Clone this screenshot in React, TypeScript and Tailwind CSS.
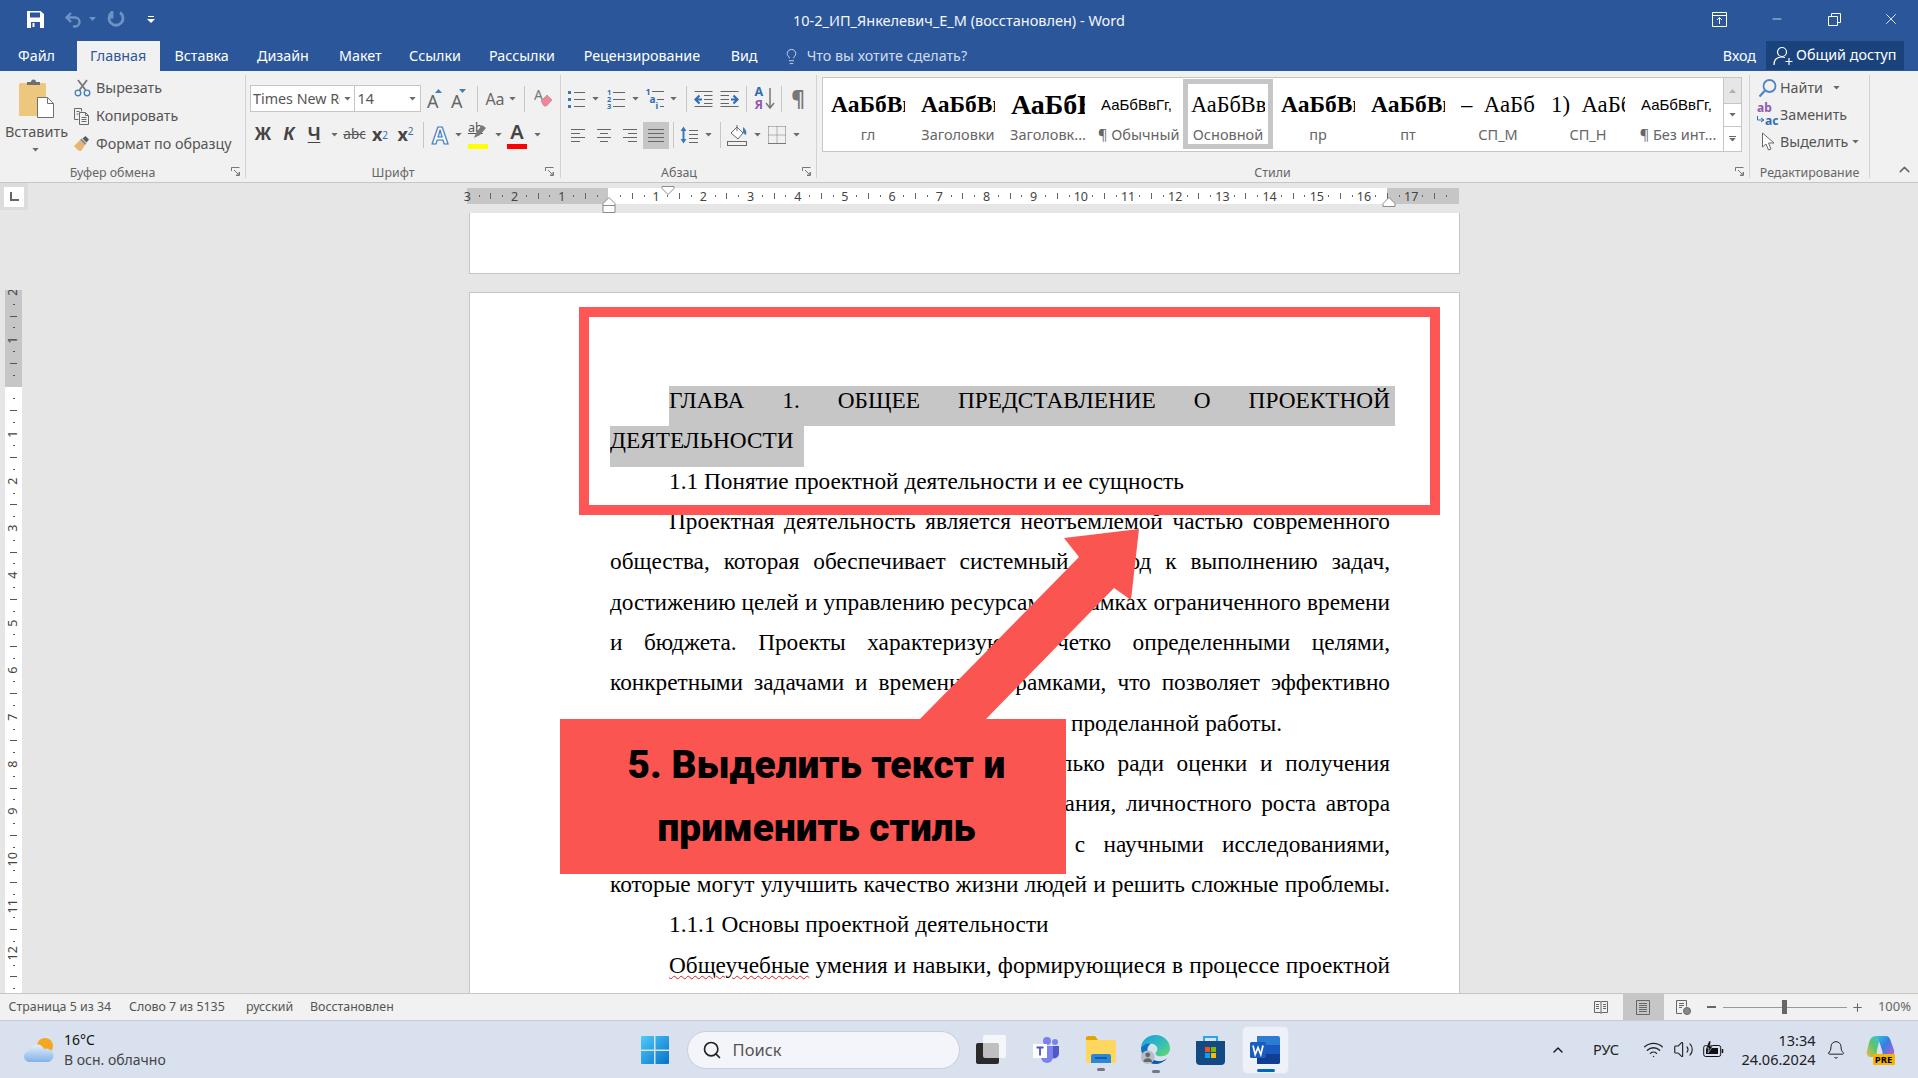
import React from "react";
import { Wifi, Volume2, ChevronUp, Bell, Search, Lightbulb, Minus, X, Plus } from "lucide-react";

const G = "#666666";
const B = "#3f7cc0";

const Caret = ({ className = "" }: { className?: string }) => (
  <svg width="7" height="4" viewBox="0 0 8 5" className={className}><path d="M0 0h8L4 4.500z" fill="#6a6a6a" /></svg>
);
const S = ({ className = "", children }: { className?: string; children?: React.ReactNode }) => (
  <div className={`flex-none h-full flex items-center justify-center ${className}`}>{children}</div>
);
const VSep = () => <div className="w-px h-[26px] bg-[#c6c6c6]" />;

const Lines = ({ rows, x1 = 2, x2 = 16, color = G }: { rows: number[]; x1?: number; x2?: number; color?: string }) => (
  <svg width="18" height="18" viewBox="0 0 18 18" fill="none" stroke={color} strokeWidth="1">
    {rows.map((y) => <path key={y} d={`M${x1} ${y}.5H${x2}`} />)}
  </svg>
);
const AlignIcon = ({ kind }: { kind: "l" | "c" | "r" }) => {
  const d = kind === "l"
    ? "M2 3.500h14M2 7.500h9M2 11.500h14M2 15.500h9"
    : kind === "c"
    ? "M2 3.500h14M5 7.500h8M2 11.500h14M5 15.500h8"
    : "M2 3.500h14M7 7.500h9M2 11.500h14M7 15.500h9";
  return <svg width="18" height="18" viewBox="0 0 18 18" fill="none" stroke={G}><path d={d} /></svg>;
};

const Launcher = ({ className = "" }: { className?: string }) => (
  <svg width="9" height="9" viewBox="0 0 9 9" fill="none" stroke="#777" className={`absolute bottom-[6px] ${className}`}>
    <path d="M.5 4V.5H8.500M.5.5H4M8.500 8.500V5M8.500 8.500H5M3 3l4.500 4.500M8 5v3H5" />
  </svg>
);

const Group = ({ label, className = "", labelClass = "", children, launcher }: { label: string; className?: string; labelClass?: string; children: React.ReactNode; launcher?: string }) => (
  <div className={`relative flex-none flex flex-col h-full ${className}`}>
    <div className="flex-1 min-h-0">{children}</div>
    <div className={`h-[19px] text-center text-[12.400px] leading-[19px] text-[#666] ${labelClass}`}>{label}</div>
    {launcher && <Launcher className={launcher} />}
  </div>
);
const GSep = () => <div className="flex-none w-px h-[103px] mt-[4px] bg-[#d2d2d2]" />;

const Scissors = () => (
  <svg width="17" height="18" viewBox="0 0 17 18" fill="none">
    <path d="M4 1l7.500 10M13 1L5.500 11" stroke="#777" strokeWidth="1.800" />
    <circle cx="4" cy="14" r="2.800" stroke={B} strokeWidth="1.300" />
    <circle cx="13" cy="14" r="2.800" stroke={B} strokeWidth="1.300" />
  </svg>
);
const CopyI = () => (
  <svg width="18" height="18" viewBox="0 0 18 18" fill="none" stroke="#6a6a6a">
    <path d="M1.500 1.500h7v3M1.500 1.500v11h4M3.500 4.500h3M3.500 7h2" />
    <path d="M6.500 5.500h6l3 3v9h-9zM12.500 5.500v3h3M8.500 10.500h5M8.500 12.500h5M8.500 14.500h5" />
  </svg>
);
const Painter = () => (
  <svg width="18" height="18" viewBox="0 0 18 18">
    <path d="M1 11l6-6 5 5-4 6c-3 0-4-2-7-5z" fill="#e6b66c" />
    <path d="M7 5l5 5 1.500-1.500-5-5z" fill="#8a8a8a" />
    <path d="M9.500 3.500l3-2.500 3.500 3.500-2.500 3z" fill="#5a5a5a" />
  </svg>
);
const PasteI = () => (
  <svg width="36" height="39" viewBox="0 0 36 39">
    <rect x="0" y="4" width="27" height="33" rx="1.500" fill="#eec77f" />
    <path d="M8 6V3h4a2.500 2.500 0 0 1 5 0h4v3z" fill="#6f6f6f" />
    <path d="M18.500 18.500h10l6 6v14h-16z" fill="#fff" stroke="#6f6f6f" />
    <path d="M28.500 18.500v6h6" fill="none" stroke="#6f6f6f" />
  </svg>
);
const Grow = ({ down }: { down?: boolean }) => (
  <div className="relative w-[18px] h-[22px]">
    <span className="absolute left-[1px] bottom-[-1px] text-[18px] leading-[20px] text-[#666]">A</span>
    <svg width="7" height="4" viewBox="0 0 7 4" className="absolute right-[2px] top-[1px]">
      {down ? <path d="M0 0h7L3.500 4z" fill={B} /> : <path d="M0 4h7L3.500 0z" fill={B} />}
    </svg>
  </div>
);
const Eraser = () => (
  <svg width="20" height="22" viewBox="0 0 20 22" fill="none">
    <text x="0" y="12" fontSize="14" fill="#777" fontFamily="Noto Sans">A</text>
    <path d="M7 13l6-6 5 5-5.500 6H10z" fill="#ea8a98" stroke="#d76a7c" strokeWidth=".6" />
  </svg>
);
const TextEffect = () => (
  <div className="text-[23px] leading-[24px] font-bold text-white [-webkit-text-stroke:1.200px_#3f7cc0]">A</div>
);
const Highlight = () => (
  <div className="relative w-[20px] h-[22px]">
    <span className="absolute left-0 top-[-3px] text-[12.500px] leading-[13px] text-[#555] underline">ab</span>
    <svg width="14" height="14" viewBox="0 0 14 14" className="absolute left-[6px] top-[0px]">
      <path d="M0 14l2-5 6-8 4 3-6 7z" fill="#7a7a7a" />
    </svg>
    <div className="absolute left-0 bottom-[-3px] w-[20px] h-[5px] bg-[#ffff00]" />
  </div>
);
const FontColor = () => (
  <div className="relative w-[20px] h-[22px]">
    <span className="absolute inset-x-0 top-[-5px] text-center text-[20px] leading-[26px] font-semibold text-[#444]">A</span>
    <div className="absolute left-0 bottom-[-3px] w-[20px] h-[5px] bg-[#ff0000]" />
  </div>
);
const Bullets = () => (
  <svg width="20" height="18" viewBox="0 0 20 18" fill="none">
    <rect x="1" y="1" width="3" height="3" fill="#3a78bd" /><rect x="1" y="8" width="3" height="3" fill="#3a78bd" /><rect x="1" y="15" width="3" height="3" fill="#3a78bd" />
    <path d="M7 2.500h11M7 9.500h11M7 16.500h11" stroke={G} />
  </svg>
);
const Numbering = () => (
  <div className="relative w-[20px] h-[22px]">
    <div className="absolute left-[1px] top-[1px] w-[6px] text-[7.500px] leading-[7.300px] font-bold text-[#2f6db5]">1<br />2<br />3</div>
    <svg width="20" height="22" viewBox="0 0 20 22" fill="none"><path d="M7 4.500h12M7 11.500h12M7 18.500h12" stroke={G} /></svg>
  </div>
);
const Multi = () => (
  <div className="relative w-[20px] h-[22px]">
    <span className="absolute left-0 top-[-1px] text-[9px] leading-[10px] font-bold text-[#2f6db5]">1</span>
    <span className="absolute left-[4px] top-[6px] text-[10px] leading-[10px] font-bold text-[#2f6db5]">a</span>
    <span className="absolute left-[10px] top-[13px] text-[9px] leading-[10px] font-bold text-[#2f6db5]">i</span>
    <svg width="20" height="22" viewBox="0 0 20 22" fill="none"><path d="M6 3.500h12M11 11.500h7M14 18.500h4" stroke={G} /></svg>
  </div>
);
const Outdent = ({ flip }: { flip?: boolean }) => (
  <svg width="19" height="18" viewBox="0 0 19 18" fill="none" stroke={G} className={flip ? "-scale-x-100" : ""}>
    <path d="M.5 1.500h18M10 5.500h8.500M10 9.500h8.500M10 13.500h8.500M.5 16.500h18" />
    <path d="M8 9.500H2M5.500 5.500L1.500 9.500l4 4" stroke="#2f6db5" strokeWidth="2.200" />
  </svg>
);
const Sort = () => (
  <div className="relative w-[20px] h-[26px]">
    <span className="absolute left-0 top-[0px] text-[12.500px] leading-[12px] font-bold text-[#2f6db5]">А</span>
    <span className="absolute left-0 top-[13px] text-[12.500px] leading-[12px] font-bold text-[#8f5ab0]">Я</span>
    <svg width="10" height="22" viewBox="0 0 10 22" fill="none" stroke="#777" strokeWidth="1.500" className="absolute right-0 top-[2px]"><path d="M5 0v20M1 15l4 5 4-5" /></svg>
  </div>
);
const LineSp = () => (
  <svg width="20" height="20" viewBox="0 0 20 20" fill="none">
    <path d="M9 5.500h9M9 9.500h9M9 13.500h9M9 17.500h9" stroke={G} />
    <path d="M3.500 4v12" stroke="#3a78bd" strokeWidth="2" />
    <path d="M.5 6l3-4.500 3 4.500zM.5 14l3 4.500 3-4.500z" fill="#3a78bd" />
  </svg>
);
const Bucket = () => (
  <svg width="22" height="22" viewBox="0 0 22 22" fill="none" stroke="#6a6a6a">
    <path d="M4 9l6-6 6 6-5 6z" fill="#fff" />
    <path d="M10 1v6" />
    <path d="M16 3c3 2 4 5 3 8-2-1-3-2-3-3z" fill="#3f7cc0" stroke="none" />
    <rect x=".5" y="17.500" width="19" height="4" fill="#f1f1f1" />
  </svg>
);
const Borders = () => (
  <svg width="18" height="18" viewBox="0 0 18 18" fill="none" stroke="#777">
    <path d="M.5.500V17.500M17.500.5V17.500M9 .5v17M.5 9h17" strokeDasharray="1 1" />
    <path d="M.5.500h17" strokeDasharray="1 1" />
    <path d="M0 17.500h18" />
  </svg>
);
const Magnifier = () => (
  <svg width="20" height="20" viewBox="0 0 20 20" fill="none">
    <circle cx="11.500" cy="8" r="6" stroke="#4d86c6" strokeWidth="1.800" />
    <path d="M7 12.500L1.500 18.500" stroke="#4d86c6" strokeWidth="2.200" />
  </svg>
);
const Replace = () => (
  <div className="relative w-[22px] h-[22px] leading-none font-bold">
    <span className="absolute left-0 top-[-3px] text-[12px] leading-[14px] text-[#8f5ab0]">ab</span>
    <span className="absolute left-[8px] top-[10px] text-[12px] leading-[14px] text-[#2f6db5]">ac</span>
    <svg width="8" height="8" viewBox="0 0 8 8" fill="none" stroke="#2f6db5" className="absolute left-0 top-[12px]"><path d="M.5 0v4h6M4 2l3 2-3 2" /></svg>
  </div>
);
const Cursor = () => (
  <svg width="14" height="20" viewBox="0 0 14 20" fill="#fff" stroke="#6a6a6a"><path d="M1.500 1v14l3.500-3 2.500 6 2.500-1-2.500-6H13z" /></svg>
);

const SERIF = "font-['Liberation_Serif',serif]";
const styles: { t: string; l: string; c: string; active?: boolean }[] = [
  { t: "АаБбВвГг", l: "гл", c: `font-bold text-[23.500px] ${SERIF}` },
  { t: "АаБбВвГг", l: "Заголовки", c: `font-bold text-[23.500px] ${SERIF}` },
  { t: "АаБбВв", l: "Заголовк...", c: `font-bold text-[28px] ${SERIF}` },
  { t: "АаБбВвГг,", l: "¶ Обычный", c: "text-[15px] font-['Liberation_Sans',sans-serif]" },
  { t: "АаБбВв", l: "Основной", c: `text-[22.300px] ${SERIF}`, active: true },
  { t: "АаБбВвГг", l: "пр", c: `font-bold text-[23.500px] ${SERIF}` },
  { t: "АаБбВвГг", l: "пт", c: `font-bold text-[23.500px] ${SERIF}` },
  { t: "–  АаБб", l: "СП_М", c: `text-[22.800px] whitespace-pre ${SERIF}` },
  { t: "1)  АаБбВв", l: "СП_Н", c: `text-[22.800px] whitespace-pre ${SERIF}` },
  { t: "АаБбВвГг,", l: "¶ Без инт...", c: "text-[15px] font-['Liberation_Sans',sans-serif]" },
];

const Ruler = () => {
  const cells = [];
  for (let i = -12; i <= 71; i++) {
    const isNum = i % 4 === 0;
    const isDash = !isNum && i % 2 === 0;
    cells.push(
      <div key={i} className="flex-none w-[11.800px] h-full flex items-center justify-center">
        {isNum ? (i !== 0 && <span className="text-[12.500px] leading-none text-[#444] pt-[2px]">{Math.abs(i / 4)}</span>) : isDash ? <div className="w-px h-[6px] bg-[#666]" /> : <div className="w-px h-[2px] bg-[#666]" />}
      </div>
    );
  }
  return (
    <div className="relative ml-[438.500px] w-[992.500px] h-[16px] flex">
      <div className="w-[141.500px] bg-[#c6c6c6]" />
      <div className="w-[779px] bg-white" />
      <div className="flex-1 bg-[#c6c6c6]" />
      <div className="absolute left-[-5px] top-0 h-full flex">{cells}</div>
      <svg width="14" height="9" viewBox="0 0 14 9" className="absolute left-[194px] top-[-2px]"><path d="M1 .5h12v2L7 8.500 1 2.500z" fill="#fff" stroke="#8a8a8a" /></svg>
      <svg width="14" height="16" viewBox="0 0 14 16" className="absolute left-[135px] top-[9px]"><path d="M7 .5l6 6v9H1v-9zM1 8.500h12" fill="#fff" stroke="#8a8a8a" /></svg>
      <svg width="14" height="10" viewBox="0 0 14 10" className="absolute left-[915px] top-[9px]"><path d="M7 .5l6 6v3H1v-3z" fill="#fff" stroke="#8a8a8a" /></svg>
    </div>
  );
};

const VRuler = () => {
  const cells = [];
  for (let i = -8; i <= 52; i++) {
    const isNum = i % 4 === 0;
    const isDash = !isNum && i % 2 === 0;
    cells.push(
      <div key={i} className="flex-none h-[11.800px] w-full flex items-center justify-center">
        {isNum ? (i !== 0 && <span className="-rotate-90 text-[12.500px] leading-none text-[#444]">{Math.abs(i / 4)}</span>) : isDash ? <div className="h-px w-[7px] bg-[#555]" /> : <div className="h-px w-[2px] bg-[#555]" />}
      </div>
    );
  }
  return (
    <div className="relative ml-[5px] mt-[80px] w-[17px] flex-1 overflow-hidden flex flex-col">
      <div className="h-[97px] bg-[#c6c6c6]" />
      <div className="flex-1 bg-white" />
      <div className="absolute left-0 top-[-3.300px] w-full flex flex-col">{cells}</div>
    </div>
  );
};

const J = "text-justify [text-align-last:justify] [word-spacing:-2px]";
const TL = ({ className = "", children }: { className?: string; children: React.ReactNode }) => (
  <div className={`h-[40.350px] leading-[28px] ${className}`}>{children}</div>
);

const Edge = () => (
  <svg width="31" height="31" viewBox="0 0 32 32">
    <defs>
      <linearGradient id="e1" x1="0" y1="0" x2="1" y2="1"><stop offset="0" stopColor="#1b9de2" /><stop offset=".6" stopColor="#35c1b4" /><stop offset="1" stopColor="#6fdc5c" /></linearGradient>
      <linearGradient id="e2" x1="0" y1="0" x2="1" y2="1"><stop offset="0" stopColor="#0f7ad0" /><stop offset="1" stopColor="#0a4ea0" /></linearGradient>
    </defs>
    <path d="M1 14C2 6 8 1 16 1c9 0 15 7 15 14 0 5-4 8-9 8-3 0-6-1-6-3 0-1 2-2 2-4 0-4-3-6-7-6-5 0-9 2-10 4z" fill="url(#e1)" />
    <path d="M1 14c2-3 6-5 10-4-3 2-4 5-3 9 1 5 6 9 12 9 3 0 5-1 8-3-3 4-8 6-12 6C8 31 1 24 1 14z" fill="url(#e2)" />
    <circle cx="8" cy="24" r="7" fill="#b8bcc4" />
    <circle cx="8" cy="21.500" r="2.500" fill="#666" />
    <path d="M3.500 29a4.500 4 0 0 1 9 0z" fill="#666" />
  </svg>
);

export default function App() {
  return (
    <div className="relative w-[1918px] h-[1078px] overflow-hidden flex flex-col font-['Noto_Sans',sans-serif] text-[14.300px] bg-white">
      {/* header */}
      <div className="flex-none h-[71px] bg-[#2b579a] flex flex-col text-white">
        <div className="h-[41px] grid grid-cols-[1fr_auto_1fr]">
          <div className="flex h-[38px] pl-[20px]">
            <S className="w-[30px]">
              <svg width="17" height="17" viewBox="0 0 17 17"><path d="M0 0h13.500L17 3v14H0z" fill="#fff" /><path d="M3 1.500h10v5H3z" fill="#2b579a" /><path d="M4 11h9v6H4z" fill="#2b579a" /><path d="M5.500 12h2v4h-2z" fill="#fff" /></svg>
            </S>
            <S className="w-[26px] ml-[10px]">
              <svg width="18" height="18" viewBox="0 0 18 18" fill="none" stroke="#6f92c4" strokeWidth="2.400"><path d="M7 3L2.500 7.500 7 12M3 7.500h8a4.500 4.500 0 0 1 0 9H9" /></svg>
            </S>
            <S className="w-[12px]"><svg width="7" height="4" viewBox="0 0 7 4"><path d="M0 0h7L3.500 4z" fill="#6f92c4" /></svg></S>
            <S className="w-[26px] ml-[5px]">
              <svg width="18" height="18" viewBox="0 0 18 18" fill="none" stroke="#6f92c4" strokeWidth="2.800"><path d="M13 2.500a7 7 0 1 1-8 0M5 1v6H1" /></svg>
            </S>
            <S className="w-[26px] ml-[9px]">
              <svg width="8" height="8" viewBox="0 0 8 8" fill="#fff"><path d="M1 1h6v1H1zM0 4h8L4 8z" /></svg>
            </S>
          </div>
          <div className="text-[14.500px] leading-[41px] text-[#f3f6fb]">10-2_ИП_Янкелевич_Е_М (восстановлен) - Word</div>
          <div className="flex justify-end h-[38px]">
            <S className="w-[58px]"><svg width="15" height="15" viewBox="0 0 15 15" fill="none" stroke="#fff"><path d="M.5.500h14v14H.5zM.5 3.500h14M7.500 12V6M5 8l2.500-2.500L10 8" /></svg></S>
            <S className="w-[58px]"><Minus size={14} strokeWidth={1.200} /></S>
            <S className="w-[57px]"><svg width="13" height="13" viewBox="0 0 13 13" fill="none" stroke="#fff"><path d="M.5 3.500h9v9h-9zM3.500 3V.5h9v9H10" /></svg></S>
            <S className="w-[55px]"><X size={18} strokeWidth={1.100} /></S>
          </div>
        </div>
        <div className="h-[30px] flex leading-[30px]">
          <div className="w-[77px] pl-[18px]">Файл</div>
          <div className="w-[83px] pl-[13px] bg-[#f1f1f1] text-[#2b579a]">Главная</div>
          <div className="w-[97px] pl-[14.500px]">Вставка</div>
          <div className="w-[82px]">Дизайн</div>
          <div className="w-[70px]">Макет</div>
          <div className="w-[80px]">Ссылки</div>
          <div className="w-[94.700px]">Рассылки</div>
          <div className="w-[147px]">Рецензирование</div>
          <div className="w-[50px]">Вид</div>
          <S className="w-[22px]"><Lightbulb size={17} strokeWidth={1} /></S>
          <div className="ml-[4px] text-[#d0dcee]">Что вы хотите сделать?</div>
          <div className="flex-1" />
          <div className="mr-[10px]">Вход</div>
          <div className="w-[138px] h-[29px] mr-[14px] bg-[#19437a] flex items-center pl-[7px] leading-none">
            <svg width="20" height="20" viewBox="0 0 20 20" fill="none" stroke="#fff" strokeWidth="1.200"><circle cx="9" cy="6" r="4.500" /><path d="M1 19c0-5 3-8 8-8 1 0 2 .2 3 .5M12.500 15.500h7M16 12v7" /></svg>
            <span className="ml-[3px]">Общий доступ</span>
          </div>
        </div>
      </div>

      {/* ribbon */}
      <div className="flex-none h-[112px] bg-[#f1f1f1] border-b border-[#c6c6c6] flex text-[#555]">
        <Group label="Буфер обмена" className="w-[245px]" labelClass="pr-[20px]" launcher="right-[5px]">
          <div className="flex h-full">
            <div className="w-[73px] flex-none flex flex-col items-center pt-[8px]">
              <PasteI />
              <div className="mt-[3px] text-[14.500px] leading-[20px]">Вставить</div>
              <Caret className="mt-[7px] -ml-[2px]" />
            </div>
            <div className="flex flex-col pt-[3px]">
              <div className="h-[28px] flex items-center"><S className="w-[18px]"><Scissors /></S><span className="ml-[5px]">Вырезать</span></div>
              <div className="h-[28px] flex items-center"><S className="w-[18px]"><CopyI /></S><span className="ml-[5px]">Копировать</span></div>
              <div className="h-[28px] flex items-center"><S className="w-[18px]"><Painter /></S><span className="ml-[5px]">Формат по образцу</span></div>
            </div>
          </div>
        </Group>
        <GSep />
        <Group label="Шрифт" className="w-[314px]" labelClass="pr-[20px]" launcher="right-[6px]">
          <div className="pl-[4px] pt-[14px]">
            <div className="h-[27px] flex">
              <div className="w-[104.500px] h-full bg-white border border-[#c6c6c6] flex items-center pl-[2px] pr-[3px] justify-between">
                <span className="whitespace-nowrap overflow-hidden w-[87px] text-[14.300px]">Times New Roman</span><Caret />
              </div>
              <div className="w-[67.500px] h-full -ml-px bg-white border border-[#c6c6c6] flex items-center pl-[3px] pr-[4px] justify-between">
                <span className="text-[14.300px]">14</span><Caret />
              </div>
              <S className="w-[24px] ml-[2px]"><Grow /></S>
              <S className="w-[24px]"><Grow down /></S>
              <S className="w-[12px]"><VSep /></S>
              <S className="w-[24px] text-[16px] text-[#666]">Aa</S>
              <S className="w-[10px]"><Caret /></S>
              <S className="w-[14px]"><VSep /></S>
              <S className="w-[26px]"><Eraser /></S>
            </div>
            <div className="h-[27px] mt-[9px] flex text-[#444]">
              <S className="w-[26px] font-bold text-[18px] font-['Liberation_Sans',sans-serif]">Ж</S>
              <S className="w-[26px] font-bold italic text-[18px] font-['Liberation_Sans',sans-serif]">К</S>
              <S className="w-[24px] font-bold text-[18px] underline underline-offset-2 font-['Liberation_Sans',sans-serif]">Ч</S>
              <S className="w-[16px]"><Caret /></S>
              <S className="w-[25px] text-[13.500px] line-through text-[#555]">abc</S>
              <S className="w-[26px] font-bold text-[18px]"><span>x</span><span className="text-[10px] text-[#2f6db5] font-normal self-end mb-[5px]">2</span></S>
              <S className="w-[25px] font-bold text-[18px]"><span>x</span><span className="text-[10px] text-[#2f6db5] font-normal self-start mt-[3px]">2</span></S>
              <S className="w-[10px]"><VSep /></S>
              <S className="w-[24px]"><TextEffect /></S>
              <S className="w-[12px]"><Caret /></S>
              <S className="w-[28px]"><Highlight /></S>
              <S className="w-[12px]"><Caret /></S>
              <S className="w-[26px]"><FontColor /></S>
              <S className="w-[14px]"><Caret /></S>
            </div>
          </div>
        </Group>
        <GSep />
        <Group label="Абзац" className="w-[255px]" labelClass="pr-[19px]" launcher="right-[5px]">
          <div className="pl-[4px] pt-[14px]">
            <div className="h-[27px] flex">
              <S className="w-[24px]"><Bullets /></S>
              <S className="w-[12px]"><Caret /></S>
              <S className="w-[30px]"><Numbering /></S>
              <S className="w-[8px]"><Caret /></S>
              <S className="w-[21px] ml-[6px]"><Multi /></S>
              <S className="w-[14px]"><Caret /></S>
              <S className="w-[12px]"><VSep /></S>
              <S className="w-[22px]"><Outdent /></S>
              <S className="w-[30px]"><Outdent flip /></S>
              <S className="w-[4px]"><VSep /></S>
              <S className="w-[33px]"><Sort /></S>
              <S className="w-px"><VSep /></S>
              <S className="w-[32px] text-[21px] font-bold text-[#777]">¶</S>
            </div>
            <div className="h-[27px] mt-[9px] flex">
              <S className="w-[26px]"><AlignIcon kind="l" /></S>
              <S className="w-[26px]"><AlignIcon kind="c" /></S>
              <S className="w-[26px]"><AlignIcon kind="r" /></S>
              <S className="w-[26px] mt-[1px] pb-[2px] bg-[#c6c6c6]"><Lines rows={[3, 7, 11, 15]} x1={1} x2={17} /></S>
              <S className="w-[8px]"><VSep /></S>
              <S className="w-[26px]"><LineSp /></S>
              <S className="w-[10px]"><Caret /></S>
              <S className="w-[14px]"><VSep /></S>
              <S className="w-[22px]"><Bucket /></S>
              <S className="w-[16px]"><Caret /></S>
              <S className="w-[24px]"><Borders /></S>
              <S className="w-[14px]"><Caret /></S>
            </div>
          </div>
        </Group>
        <GSep />
        <Group label="Стили" className="w-[932px]" labelClass="pr-[21px]" launcher="right-[5px]">
          <div className="ml-[5px] mt-[6px] w-[920px] h-[75px] bg-white border border-[#c6c6c6] flex">
            {styles.map((s) => (
              <div key={s.l} className={`flex-none w-[90px] h-[70px] mt-[1px] border-[5px] ${s.active ? "border-[#c6c6c6]" : "border-transparent"}`}>
                <div className={`mx-[3px] w-[74px] h-[41px] leading-[41px] overflow-hidden whitespace-nowrap text-black ${s.c}`}>{s.t}</div>
                <div className="h-[18px] leading-[18px] text-center text-[14.500px] text-[#666] whitespace-nowrap">{s.l}</div>
              </div>
            ))}
            <div className="flex-1 border-l border-[#c6c6c6] flex flex-col">
              <div className="h-[26px] bg-[#e6e6e6] flex items-center justify-center border-b border-[#c6c6c6]"><svg width="7" height="4" viewBox="0 0 7 4"><path d="M0 4h7L3.500 0z" fill="#b0b0b0" /></svg></div>
              <div className="h-[23px] flex items-center justify-center border-b border-[#c6c6c6]"><Caret /></div>
              <div className="flex-1 flex flex-col items-center justify-center gap-[1px]"><div className="w-[7px] h-px bg-[#666]" /><Caret /></div>
            </div>
          </div>
        </Group>
        <GSep />
        <Group label="Редактирование" className="w-[119px]">
          <div className="flex flex-col pt-[3px] pl-[6px]">
            <div className="h-[27px] flex items-center"><S className="w-[24px]"><Magnifier /></S><span>Найти</span><Caret className="ml-[10px]" /></div>
            <div className="h-[27px] flex items-center"><S className="w-[24px]"><Replace /></S><span>Заменить</span></div>
            <div className="h-[27px] flex items-center"><S className="w-[24px]"><Cursor /></S><span>Выделить</span><Caret className="ml-[4px]" /></div>
          </div>
        </Group>
        <GSep />
        <div className="flex-1 flex items-end justify-center pb-[4px]"><ChevronUp size={17} strokeWidth={2} className="text-[#666] ml-[20px]" /></div>
      </div>

      {/* workspace */}
      <div className="flex-1 min-h-0 flex bg-[#e6e6e6] overflow-hidden">
        <div className="flex-none w-[28px] flex flex-col">
          <div className="h-[27px] bg-[#dcdcdc] flex items-center justify-center">
            <div className="w-[20px] h-[20px] bg-white flex items-center justify-center">
              <svg width="9" height="9" viewBox="0 0 9 9" fill="none" stroke="#666" strokeWidth="2"><path d="M1 0v8h8" /></svg>
            </div>
          </div>
          <VRuler />
        </div>
        <div className="flex-1 min-w-0 flex flex-col">
          <div className="flex-none h-[30px] pt-[5px]"><Ruler /></div>
          <div className="flex-none ml-[440.500px] w-[991px] h-[61px] bg-white border-x border-b border-[#c6c6c6]" />
          <div className="flex-none mt-[18px] ml-[440.500px] w-[991px] h-[701px] bg-white border-x border-t border-[#c6c6c6] overflow-hidden pt-[93px] pl-[140.500px] text-[23.300px] text-black font-['Liberation_Serif',serif]">
            <div className="w-[780px]">
              <TL className="ml-[59px] -mr-[5px] pr-[5px] bg-[#c6c6c6]"><div className={J}>ГЛАВА 1. ОБЩЕЕ ПРЕДСТАВЛЕНИЕ О ПРОЕКТНОЙ</div></TL>
              <TL className="w-[194px] bg-[#c6c6c6]">ДЕЯТЕЛЬНОСТИ</TL>
              <TL className="ml-[59px]">1.1 Понятие проектной деятельности и ее сущность</TL>
              <TL className={`ml-[59px] ${J}`}>Проектная деятельность является неотъемлемой частью современного</TL>
              <TL className={J}>общества, которая обеспечивает системный подход к выполнению задач,</TL>
              <TL className={J}>достижению целей и управлению ресурсами в рамках ограниченного времени</TL>
              <TL className={J}>и бюджета. Проекты характеризуются четко определенными целями,</TL>
              <TL className={J}>конкретными задачами и временными рамками, что позволяет эффективно</TL>
              <TL className="flex"><span className="flex-none w-[461px] whitespace-nowrap overflow-hidden">оценивать и анализировать результаты</span><span>проделанной работы.</span></TL>
              <TL className={`ml-[59px] ${J}`}>Проектная деятельность важна не только ради оценки и получения</TL>
              <TL className={J}>результатов, но ещё и для обучения, воспитания, личностного роста автора</TL>
              <TL className={J}>и команды, а также она тесно связана с научными исследованиями,</TL>
              <TL className={J}>которые могут улучшить качество жизни людей и решить сложные проблемы.</TL>
              <TL className="ml-[59px]">1.1.1 Основы проектной деятельности</TL>
              <TL className={`ml-[59px] ${J}`}><span className="underline decoration-wavy decoration-[#e02020] decoration-1 underline-offset-2">Общеучебные</span> умения и навыки, формирующиеся в процессе проектной</TL>
            </div>
          </div>
        </div>
      </div>

      {/* status */}
      <div className="flex-none h-[27px] bg-[#f1f1f1] border-t border-[#c6c6c6] flex items-center text-[12.400px] text-[#555]">
        <span className="ml-[8.600px] w-[120.400px]">Страница 5 из 34</span>
        <span className="w-[117px]">Слово 7 из 5135</span>
        <span className="w-[64px]">русский</span>
        <span>Восстановлен</span>
        <div className="flex-1" />
        <S className="w-[44px]">
          <svg width="14" height="15" viewBox="0 0 14 15" fill="none" stroke="#666"><path d="M.5 1.500h6l.5 1 .5-1h6v11h-6l-.5 1-.5-1h-6zM7 2.500v10M2 4.500h3M2 6.500h3M2 8.500h3M9 4.500h3M9 6.500h3M9 8.500h3" /></svg>
        </S>
        <S className="w-[41px] bg-[#c6c6c6]">
          <svg width="14" height="15" viewBox="0 0 14 15" fill="none" stroke="#666"><path d="M.5.500h13v14H.5zM3 3.500h8M3 5.500h8M3 7.500h8M3 9.500h8M3 11.500h8" /></svg>
        </S>
        <S className="w-[40px]">
          <svg width="15" height="15" viewBox="0 0 15 15" fill="none" stroke="#666"><path d="M6 13.500H.5V.5h10v6M3 3.500h5M3 5.500h5M3 7.500h3" /><circle cx="11" cy="11" r="3.500" fill="#888" /></svg>
        </S>
        <S className="w-[15px]"><div className="w-[9px] h-[2px] bg-[#666]" /></S>
        <div className="relative w-[124px] h-px bg-[#999] mx-[4px]">
          <div className="absolute left-[59px] top-[-7px] w-[5px] h-[14px] bg-[#666]" />
        </div>
        <S className="w-[14px]"><Plus size={13} strokeWidth={2} className="text-[#666]" /></S>
        <span className="ml-[13px] mr-[7px] text-[13px] text-[#666]">100%</span>
      </div>

      {/* taskbar */}
      <div className="flex-none h-[58px] bg-[#d9e0ee] border-t border-[#c3cad8] flex items-center text-[#222]">
        <div className="w-[639.600px] flex items-center pl-[24px]">
          <svg width="31" height="26" viewBox="0 0 31 26">
            <defs><linearGradient id="cl" x1="0" y1="0" x2="0" y2="1"><stop offset="0" stopColor="#e4eefb" /><stop offset="1" stopColor="#82b2e8" /></linearGradient></defs>
            <circle cx="21" cy="9" r="8" fill="#f5a623" />
            <path d="M6 25a5.500 5.500 0 0 1-1-11 8 8 0 0 1 15-2 6.500 6.500 0 0 1 5 13z" fill="url(#cl)" />
          </svg>
          <div className="ml-[9px] flex flex-col text-[14px] leading-[20px]">
            <span className="text-[#111]">16°C</span>
            <span className="text-[#444]">В осн. облачно</span>
          </div>
        </div>
        <svg width="30" height="30" viewBox="0 0 30 30">
          <defs>
            <linearGradient id="st" x1="0" y1="0" x2="1" y2="1"><stop offset="0" stopColor="#4fcbfa" /><stop offset="1" stopColor="#0671c8" /></linearGradient>
          </defs>
          <path d="M1 2a1 1 0 0 1 1-1h12v13.500H1zM15.500 1H28a1 1 0 0 1 1 1v12.500H15.500zM1 16h13v13H2a1 1 0 0 1-1-1zM15.500 16H29v12a1 1 0 0 1-1 1H15.500z" fill="url(#st)" />
        </svg>
        <div className="ml-[17px] w-[273.500px] h-[38px] rounded-full bg-[#f3f5fa] border border-[#c9cfdc] flex items-center pl-[14px]">
          <Search size={20} strokeWidth={2} className="text-[#222]" />
          <span className="ml-[11px] pt-[1px] text-[16.500px] text-[#555]">Поиск</span>
        </div>
        <div className="ml-[16px] w-[30px] h-[29px] relative">
          <div className="absolute left-0 bottom-0 w-[23px] h-[21px] rounded-[2px] bg-[#2a2a2a]" />
          <div className="absolute right-0 top-0 w-[23px] h-[23px] rounded-[2px] bg-[#ffffffb3]" />
        </div>
        <div className="ml-[27px] w-[27px]">
          <svg width="27" height="28" viewBox="0 0 27 28">
            <circle cx="22" cy="6" r="3" fill="#7b83eb" />
            <circle cx="14" cy="5" r="4" fill="#7b83eb" />
            <path d="M19 10h7v8a5 5 0 0 1-7 4z" fill="#5059c9" />
            <path d="M8 10h12v11a6 6 0 0 1-12 0z" fill="#7b83eb" />
            <rect x="0" y="8" width="14" height="14" fill="#fff" />
            <path d="M3.500 11.500h7M7 11.500v8" stroke="#4b53bc" strokeWidth="1.800" fill="none" />
          </svg>
        </div>
        <div className="relative ml-[26px] w-[30px]">
          <svg width="30" height="27" viewBox="0 0 30 27">
            <path d="M0 2a2 2 0 0 1 2-2h7l3 4h-12z" fill="#e3a400" />
            <path d="M0 4h28a2 2 0 0 1 2 2v19a2 2 0 0 1-2 2H2a2 2 0 0 1-2-2z" fill="#ffd75e" />
            <path d="M5 20a2 2 0 0 1 2-2h16a2 2 0 0 1 2 2v7H5z" fill="#2b88d8" />
            <path d="M9 22h12" stroke="#0f4f90" strokeWidth="1.500" />
          </svg>
          <div className="absolute left-[11px] bottom-[-8px] w-[8px] h-[3px] rounded-full bg-[#70788a]" />
        </div>
        <div className="relative ml-[24px] w-[31px]">
          <Edge />
          <div className="absolute left-[12px] bottom-[-8px] w-[8px] h-[3px] rounded-full bg-[#70788a]" />
        </div>
        <div className="ml-[25px] w-[29px]">
          <svg width="29" height="30" viewBox="0 0 29 30">
            <path d="M8 6V2h13v4" fill="none" stroke="#28a8ea" strokeWidth="2" />
            <path d="M0 6h29v20a4 4 0 0 1-4 4H4a4 4 0 0 1-4-4z" fill="#134a84" />
            <rect x="9" y="12" width="5" height="5" fill="#f25022" /><rect x="15" y="12" width="5" height="5" fill="#7fba00" />
            <rect x="9" y="18" width="5" height="5" fill="#00a4ef" /><rect x="15" y="18" width="5" height="5" fill="#ffb900" />
          </svg>
        </div>
        <div className="relative ml-[16.600px] w-[47.400px] h-[48px] rounded-[5px] bg-[#eef1f8] border border-[#dfe4ee] flex items-center justify-center">
          <svg width="30" height="28" viewBox="0 0 30 28">
            <path d="M7 0h21a2 2 0 0 1 2 2v24a2 2 0 0 1-2 2H7z" fill="#2b7cd3" />
            <path d="M7 9h23v9H7z" fill="#185abd" />
            <path d="M7 18h23v8a2 2 0 0 1-2 2H7z" fill="#103f91" />
            <rect x="0" y="6" width="16" height="16" rx="1.500" fill="#1a5dbf" />
            <path d="M3 9.500l2.200 9 2.800-7 2.800 7 2.200-9" fill="none" stroke="#fff" strokeWidth="1.700" />
          </svg>
          <div className="absolute left-[14px] bottom-[1px] w-[18px] h-[3px] rounded-full bg-[#0067c0]" />
        </div>
        <div className="flex-1" />
        <S className="w-[16px]"><ChevronUp size={20} strokeWidth={2} className="text-[#111]" /></S>
        <span className="ml-[27px] w-[28px] text-[14.500px]">РУС</span>
        <S className="w-[22px] ml-[21px]"><Wifi size={21} strokeWidth={1.500} /></S>
        <S className="w-[22px] ml-[8px]"><Volume2 size={21} strokeWidth={1.300} /></S>
        <S className="w-[22px] ml-[8px]">
          <svg width="21" height="18" viewBox="0 0 21 18" fill="none"><rect x=".7" y="4.500" width="17" height="11" rx="2" stroke="#111" /><rect x="3" y="7" width="12" height="6" fill="#111" /><path d="M19.500 8v4" stroke="#111" strokeWidth="1.500" /><path d="M6 0L3 7h3l-1 5 5-7H7l1-5z" fill="#111" stroke="#d9e0ee" strokeWidth=".6" /></svg>
        </S>
        <div className="w-[91.500px] flex flex-col items-end text-[14.500px] leading-[19px]">
          <span>13:34</span><span>24.06.2024</span>
        </div>
        <S className="w-[20px] ml-[10px]"><Bell size={20} strokeWidth={1.200} /></S>
        <div className="relative ml-[20px] mr-[23.500px] w-[29px] h-[29px]">
          <svg width="29" height="26" viewBox="0 0 29 26">
            <defs><linearGradient id="cp" x1="0" y1="0" x2="1" y2="1"><stop offset="0" stopColor="#2cc5e8" /><stop offset=".45" stopColor="#3a7be0" /><stop offset="1" stopColor="#d65ad8" /></linearGradient>
            <linearGradient id="cp2" x1="0" y1="1" x2="1" y2="0"><stop offset="0" stopColor="#f4b93c" /><stop offset=".5" stopColor="#5fc46a" /><stop offset="1" stopColor="#2cc5e8" /></linearGradient></defs>
            <path d="M10 1h10c2 0 3 1 4 3l4 11c1 4-2 9-6 9h-9c4-2 4-6 3-9l-3-9c-1-3-1-4-3-5z" fill="url(#cp)" />
            <path d="M10 1C6 1 4 4 3 8L1 16c-1 4 1 6 4 6h9c-3 0-4-3-3-7l2-8c.5-3-1-6-3-6z" fill="url(#cp2)" />
          </svg>
          <div className="absolute left-[7px] bottom-[-1px] w-[22px] h-[11px] rounded-[1px] bg-[#f7b500] text-center text-[9.500px] leading-[11px] font-bold text-black">PRE</div>
        </div>
      </div>

      {/* annotations */}
      <div className="absolute left-[579px] top-[307px] w-[861px] h-[208px] border-[10px] border-[#fe5555]" />
      <svg width="250" height="210" viewBox="0 0 250 210" className="absolute left-[900px] top-[520px]">
        <path d="M239 9L231 80 214 68 86 199H20L179 37 164 18z" fill="#fa5550" />
      </svg>
      <div className="absolute left-[560px] top-[719px] w-[506px] h-[155px] pl-[7px] pb-[2px] bg-[#fa5550] flex flex-col items-center justify-center font-['Roboto',sans-serif] font-black text-[38.800px] leading-[63px] text-black">
        <div>5. Выделить текст и</div>
        <div>применить стиль</div>
      </div>
    </div>
  );
}
